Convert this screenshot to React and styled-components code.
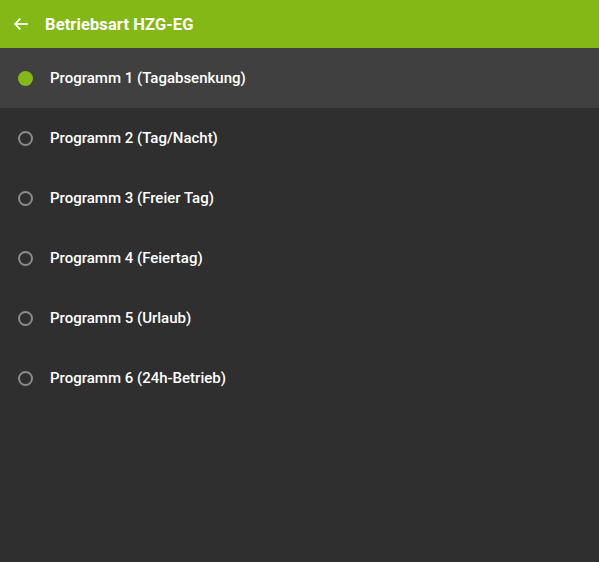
import React, { useState } from "react";
import styled, { createGlobalStyle } from "styled-components";

const GlobalStyle = createGlobalStyle`
  html, body {
    margin: 0;
    padding: 0;
    height: 100%;
    background: #2f2f2f;
  }
  #root {
    height: 100%;
  }
`;

const programs = [
  "Programm 1 (Tagabsenkung)",
  "Programm 2 (Tag/Nacht)",
  "Programm 3 (Freier Tag)",
  "Programm 4 (Feiertag)",
  "Programm 5 (Urlaub)",
  "Programm 6 (24h-Betrieb)",
];

const Page = styled.div`
  min-height: 100vh;
  background: #2f2f2f;
  font-family: Roboto, "Liberation Sans", sans-serif;
  color: #fff;
`;

const Header = styled.header`
  height: 48px;
  background: #84b817;
  display: flex;
  align-items: center;
  padding-left: 12px;
  gap: 15px;
`;

const BackButton = styled.button`
  background: none;
  border: 0;
  padding: 0;
  width: 18px;
  height: 18px;
  display: flex;
  align-items: center;
  justify-content: center;
  color: #fff;
  cursor: pointer;
`;

const Title = styled.h1`
  margin: 0;
  font-size: 16.5px;
  font-weight: 700;
  letter-spacing: 0.1px;
`;

const List = styled.ul`
  list-style: none;
  margin: 0;
  padding: 0;
`;

const Row = styled.li`
  height: 60px;
  display: flex;
  align-items: center;
  padding-left: 18px;
  gap: 17px;
  background: ${(p) => (p.$active ? "#404040" : "transparent")};
  cursor: pointer;
`;

const Radio = styled.span`
  width: 15px;
  height: 15px;
  box-sizing: border-box;
  border-radius: 50%;
  border: ${(p) => (p.$checked ? "none" : "2px solid #8a8a8a")};
  background: ${(p) => (p.$checked ? "#84b817" : "transparent")};
  flex-shrink: 0;
`;

const Label = styled.span`
  font-size: 15px;
  font-weight: 500;
`;

export default function App() {
  const [selected, setSelected] = useState(0);
  return (
    <Page>
      <GlobalStyle />
      <Header>
        <BackButton aria-label="Zurück">
          <svg width="16" height="16" viewBox="0 0 24 24" fill="none" stroke="#fff" strokeWidth="2.6" strokeLinecap="square">
            <path d="M21 12H4" />
            <path d="M11 4l-8 8 8 8" strokeLinecap="butt" />
          </svg>
        </BackButton>
        <Title>Betriebsart HZG-EG</Title>
      </Header>
      <List>
        {programs.map((p, i) => (
          <Row key={p} $active={i === selected} onClick={() => setSelected(i)}>
            <Radio $checked={i === selected} />
            <Label>{p}</Label>
          </Row>
        ))}
      </List>
    </Page>
  );
}
